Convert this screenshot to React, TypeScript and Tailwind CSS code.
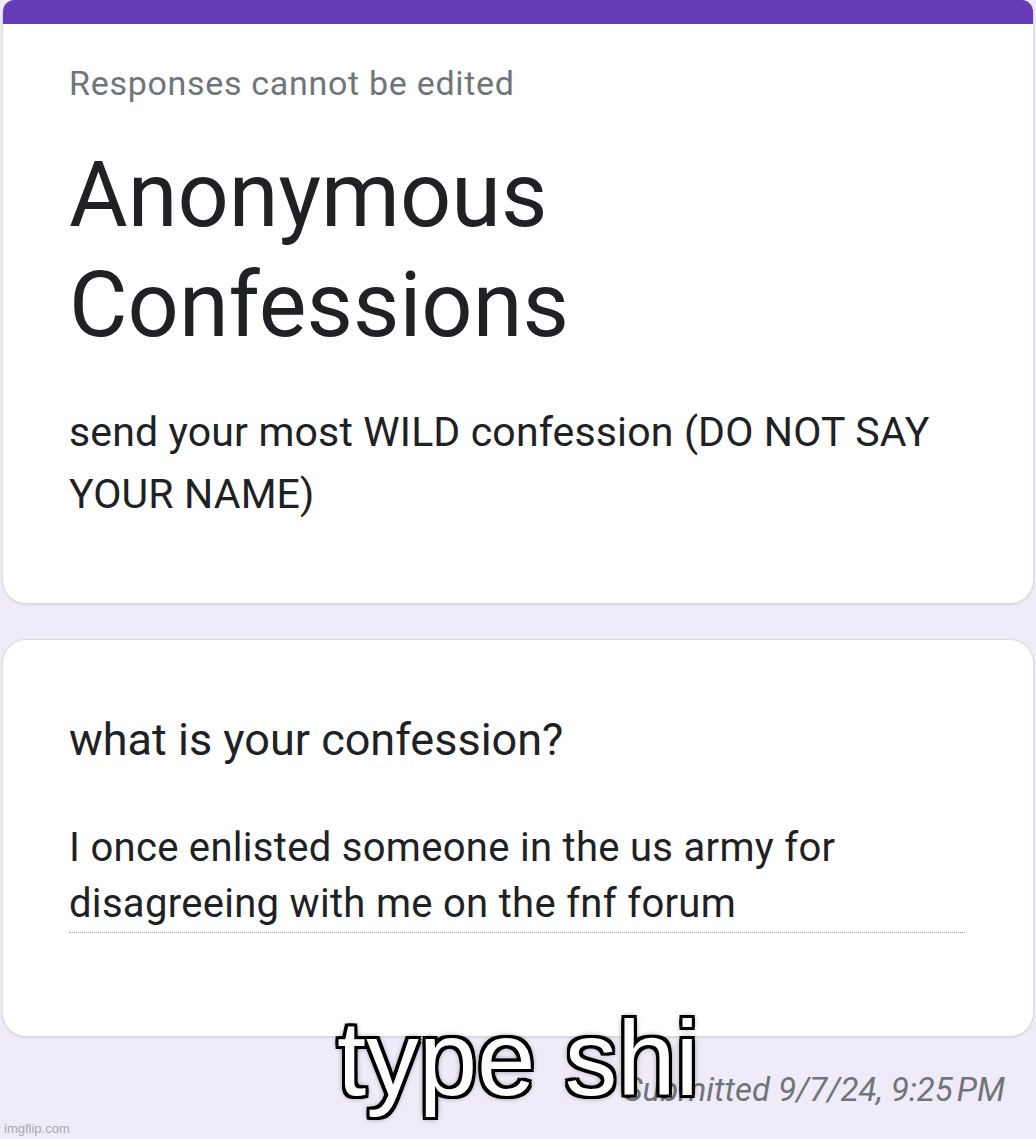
import React from "react";

const roboto = { fontFamily: "Roboto, 'Noto Sans', Arial, sans-serif" };

const FormHeader = () => (
  <div className="mx-[2px] overflow-hidden rounded-t-[12px] rounded-b-[24px] border-x border-b border-[#dadce0] bg-white shadow-[0_1px_2px_rgba(60,64,67,0.12)]">
    <div className="h-[24px] bg-[#673ab7]"></div>
    <div className="px-[66px] pt-[35px] pb-[78px]">
      <div className="text-[34px] leading-[48px] tracking-[0.7px] text-[#70757a]">Responses cannot be edited</div>
      <h1 className="mt-[34px] text-[90px] leading-[110px] font-normal text-[#202124]">
        Anonymous
        <br />
        Confessions
      </h1>
      <p className="mt-[40px] text-[41px] leading-[62px] tracking-[0.15px] text-[#202124]">
        send your most WILD confession (DO NOT SAY YOUR NAME)
      </p>
    </div>
  </div>
);

const QuestionCard = () => (
  <div className="mx-[2px] mt-[35px] rounded-[24px] border border-[#dadce0] bg-white px-[66px] pt-[70px] pb-[103px] shadow-[0_1px_2px_rgba(60,64,67,0.12)]">
    <div className="text-[45px] leading-[60px] text-[#202124]">what is your confession?</div>
    <div className="mt-[50px] w-[896px] border-b border-dotted border-[#9e9e9e] text-[40px] leading-[56px] tracking-[0.3px] text-[#202124]">
      I once enlisted someone in the us army for disagreeing with me on the fnf forum
    </div>
  </div>
);

export default function App() {
  return (
    <div className="relative min-h-[1139px] overflow-hidden bg-[#f0ebf8]" style={roboto}>
      <FormHeader />
      <QuestionCard />
      <div className="mt-[33px] pr-[31px] text-right text-[33px] leading-[40px] italic text-[#70757a]">
        Submitted 9/7/24, 9:25{"\u202f"}PM
      </div>

      {/* meme caption over the page */}
      <div
        className="absolute top-[1006px] left-[337px] text-[105px] leading-[105px] text-white [text-shadow:3px_3px_0_#000,-3px_-3px_0_#000,3px_-3px_0_#000,-3px_3px_0_#000,0_3px_0_#000,0_-3px_0_#000,3px_0_0_#000,-3px_0_0_#000,0_0_7px_#000]"
        style={{ fontFamily: "'Liberation Sans', Arial, sans-serif" }}
      >
        type shi
      </div>

      <div
        className="absolute bottom-[2px] left-[4px] text-[13px] leading-[16px] text-[#a9a9b0]"
        style={{ fontFamily: "'Liberation Sans', Arial, sans-serif" }}
      >
        imgflip.com
      </div>
    </div>
  );
}
